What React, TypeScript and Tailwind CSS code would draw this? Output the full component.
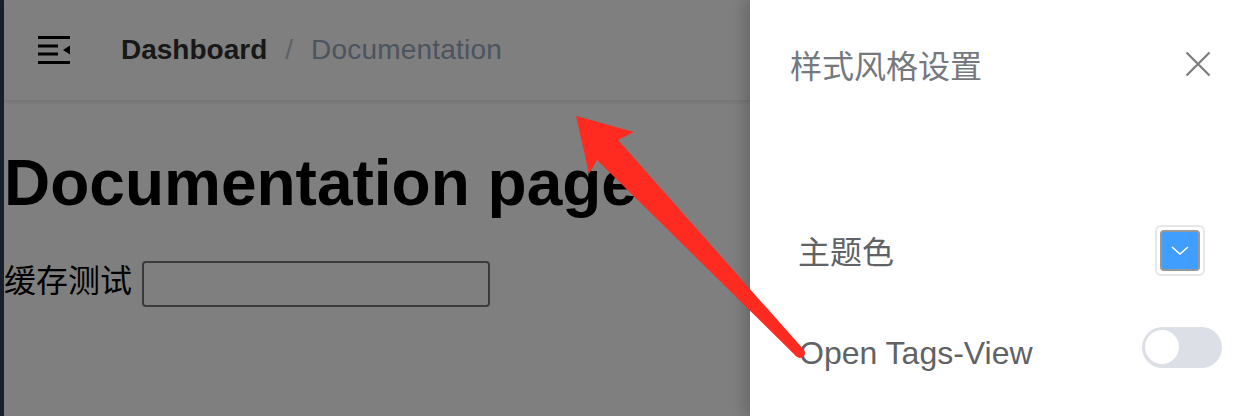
import React from "react";

function HamburgerIcon() {
  return (
    <svg width="34" height="30" viewBox="0 0 34 30" className="shrink-0">
      <rect x="0" y="1" width="32" height="3" fill="#000" />
      <rect x="0" y="9.5" width="20" height="3" fill="#000" />
      <rect x="0" y="17.5" width="20" height="3" fill="#000" />
      <rect x="0" y="26" width="32" height="3" fill="#000" />
      <polygon points="25,15 32,10.5 32,19.5" fill="#000" />
    </svg>
  );
}

function CloseIcon() {
  return (
    <svg width="26" height="26" viewBox="0 0 26 26">
      <path d="M1.5 1.5 L24.5 24.5 M24.5 1.5 L1.5 24.5" stroke="#7a7c80" strokeWidth="2.2" fill="none" />
    </svg>
  );
}

function ColorPicker() {
  return (
    <div className="w-[50px] h-[51px] border-2 border-[#e6e6e6] rounded-[6px] p-[3px] flex">
      <div className="flex-1 bg-[#409eff] border-2 border-[#999999] rounded-[4px] flex items-center justify-center">
        <svg width="18" height="9" viewBox="0 0 18 9">
          <path d="M1 1 L9 8 L17 1" stroke="#fff" strokeWidth="1.6" fill="none" />
        </svg>
      </div>
    </div>
  );
}

function Toggle() {
  return (
    <div className="w-[80px] h-[41px] rounded-full bg-[#dcdfe6] flex items-center pl-[3px]">
      <div className="w-[34px] h-[34px] rounded-full bg-white" />
    </div>
  );
}

function Arrow() {
  return (
    <svg className="absolute inset-0 pointer-events-none" width="1244" height="416" viewBox="0 0 1244 416">
      <polygon
        points="576,116 634,132 618,140 803.6,349.6 796.4,356.4 597,160 589,174"
        fill="#ff2b21"
      />
      <circle cx="800" cy="353" r="5" fill="#ff2b21" />
    </svg>
  );
}

export default function App() {
  return (
    <div className="relative w-[1244px] h-[416px] overflow-hidden font-['Liberation_Sans','Noto_Sans_CJK_SC',sans-serif]">
      {/* page under the mask */}
      <div className="flex h-full">
        <div className="w-[4px] bg-[#304156]" />
        <div className="flex-1 bg-white flex flex-col">
          <div className="h-[100px] flex items-center pl-[34px] shadow-[0_2px_4px_rgba(0,21,41,0.1)]">
            <HamburgerIcon />
            <div className="ml-[49px] flex items-center text-[28px] leading-none">
              <span className="font-bold text-[#303133]">Dashboard</span>
              <span className="mx-[18px] text-[#c0c4cc]">/</span>
              <span className="text-[#97a8be] tracking-[0.2px]">Documentation</span>
            </div>
          </div>
          <div className="pt-[46px]">
            <h1 className="text-[64px] leading-[74px] font-bold text-black">Documentation page</h1>
            <div className="mt-[35px] flex items-center gap-[10px]">
              <span className="text-[32px] leading-[46px] mb-[11px] text-black font-['Noto_Sans_CJK_SC',sans-serif]">缓存测试</span>
              <input className="w-[348px] h-[46px] border-2 border-[#767676] rounded-[4px] bg-white" />
            </div>
          </div>
        </div>
      </div>

      {/* mask */}
      <div className="absolute inset-0 bg-black/50" />

      {/* settings drawer */}
      <div className="absolute top-0 right-0 bottom-0 w-[494px] bg-white shadow-[-6px_0_14px_rgba(0,0,0,0.18)] flex flex-col font-['Noto_Sans_CJK_SC',sans-serif]">
        <div className="mt-[40px] h-[48px] flex items-center justify-between pl-[40px] pr-[33px]">
          <span className="text-[32px] text-[#75787d]">样式风格设置</span>
          <CloseIcon />
        </div>
        <div className="mt-[136px] h-[52px] flex items-center justify-between pl-[48px] pr-[39px]">
          <span className="text-[32px] text-[#606266]">主题色</span>
          <ColorPicker />
        </div>
        <div className="mt-[45px] h-[52px] flex items-center justify-between pl-[49px] pr-[22px]">
          <span className="text-[32px] text-[#606266] mt-[12px] font-['Liberation_Sans',sans-serif]">Open Tags-View</span>
          <Toggle />
        </div>
      </div>

      <Arrow />
    </div>
  );
}
